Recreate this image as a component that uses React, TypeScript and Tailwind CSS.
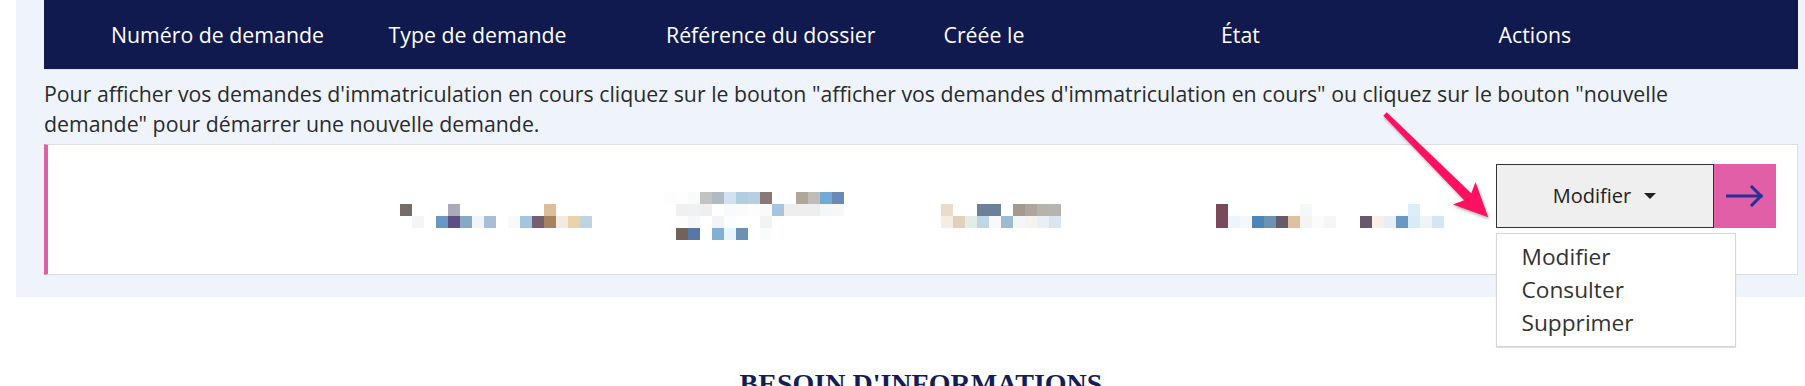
import type { ReactNode } from 'react';

type MosaicRow = string[];

// blurred cell contents, one colour per 12px block ('' = blank)
const typeCells: MosaicRow[] = [
  ['#766c68', '', '', '', '#aaaabb', '', '', '', '', '', '', '', '#dbbf9a', '', '', ''],
  ['', '#f5f5f5', '', '#6699c4', '#5b4f83', '#86a9c4', '#f1f4f8', '#a7bed6', '', '#f9f9f9', '#a3c6e0', '#735f6e', '#a78260', '#f2ebe0', '#ebd2a8', '#bcd4e4'],
];

const refCells: MosaicRow[] = [
  ['#fdfdfc', '#fefefe', '#fafafa', '#c0c3c4', '#b0bac2', '#d3e2f2', '#b2cce0', '#b7cfe0', '#8a7878', '', '', '#b0a69a', '#bebdba', '#74a8d6', '#6a89b7'],
  ['', '#eff0f1', '#eff1f3', '#efefef', '', '#f8fafd', '#f9fbfd', '#fdfdfd', '#fbfaf9', '#a7c4de', '#eeeeee', '#eeeeee', '#eeeeee', '#f3f7fb', '#f5f7fb'],
  ['', '#fdfdfd', '#f6f7f9', '', '#f3f4f7', '#fcfdfe', '', '', '#f3f3f3'],
  ['', '#73625a', '#5878a3', '', '#82b0d4', '#e8f6fb', '#6d91b4', '', '#f9fcfd'],
];

const dateCells: MosaicRow[] = [
  ['#e9dccb', '', '', '#6e8098', '#6a8199', '', '#a59a90', '#afa79e', '#b5b3ae', '#b4b5b1'],
  ['#f5ede3', '#e1d0bb', '#e3ede6', '#bfd6e7', '#f7f9fb', '#9ebbd6', '#f4f7f7', '#f6f3ef', '#e9eff5', '#d8e6ef'],
];

const stateCells: MosaicRow[] = [
  ['#7a4a58', '', '', '', '', '', '', '#f4f8fb', '', '', '', '', '', '', '', '', '#dceef8'],
  ['#7a4a5c', '#eef4fb', '#f4f8fc', '#4b86b8', '#6a93b4', '#675a6a', '#dec29f', '#f4f4f2', '#fbfbfb', '#f4f6f8', '', '', '#67586a', '#f8f0e6', '#e6eef6', '#6898c4', '#d8ecf8', '#f1f4f7', '#d3e6f4'],
];

const columns = ['Numéro de demande', 'Type de demande', 'Référence du dossier', 'Créée le', 'État', 'Actions'];

function Mosaic({ rows, className }: { rows: MosaicRow[]; className?: string }) {
  return (
    <div className={`flex flex-col ${className ?? ''}`}>
      {rows.map((row, i) => (
        <div key={i} className="flex h-[12px]">
          {row.map((c, j) => (
            <div key={j} className="w-[12px] h-[12px] shrink-0" style={{ backgroundColor: c || 'transparent' }} />
          ))}
        </div>
      ))}
    </div>
  );
}

function Cell({ children }: { children?: ReactNode }) {
  return <div className="relative">{children}</div>;
}

function ActionMenu() {
  return (
    <div className="relative ml-[-3px] mt-[19px] flex">
      <button className="flex h-[64px] w-[218px] items-center justify-center gap-[13px] border border-[#333] bg-[#efefef] text-[20px] text-[#222]">
        Modifier
        <span className="mt-[1px] h-0 w-0 border-l-[6px] border-r-[6px] border-t-[6px] border-l-transparent border-r-transparent border-t-[#222]" />
      </button>
      <button className="flex h-[64px] w-[62px] items-center justify-center bg-[#e05fa6]">
        <svg width="38" height="22" viewBox="0 0 38 22" fill="none" stroke="#27309a" strokeWidth="3" strokeLinecap="square">
          <path d="M1.5 11 H35" />
          <path d="M26 2 L35 11 L26 20" strokeLinejoin="miter" />
        </svg>
      </button>

      <ul className="absolute left-0 top-[69px] z-10 w-[240px] border border-[#d6d6d6] bg-white pb-[7px] pt-[6px] text-[22.7px] leading-[33px] text-[#333] shadow-[0_1px_1px_rgba(0,0,0,0.12)]">
        <li className="pl-[25px]">Modifier</li>
        <li className="pl-[25px]">Consulter</li>
        <li className="pl-[25px]">Supprimer</li>
      </ul>
    </div>
  );
}

function PointerArrow() {
  // annotation arrow drawn along its own axis, then turned 45°
  return (
    <svg
      className="pointer-events-none absolute left-[1370px] top-[99px] z-20 drop-shadow-[1px_2px_1.5px_rgba(0,0,0,0.3)]"
      width="140"
      height="140"
      viewBox="0 0 140 140"
    >
      <g transform="translate(15 15) rotate(45)">
        <polygon points="0,-2.4 117,-5 112,-16 146,0 112,16 117,5 0,2.4" fill="#fe1160" />
      </g>
    </svg>
  );
}

export default function App() {
  return (
    <div className="relative h-[386px] w-[1805px] overflow-hidden bg-white font-['Open_Sans',sans-serif]">
      <section className="ml-[16px] w-[1789px] bg-[#eff4fc] pb-[22px] pl-[28px] pr-[7px]">
        <div className="grid h-[70px] grid-cols-[repeat(6,277.5px)] items-center border-b border-[#dfe3ea] bg-[#111a4f] pl-[67px] text-[21.3px] text-white">
          {columns.map((c) => (
            <div key={c}>{c}</div>
          ))}
        </div>

        <p className="w-[1700px] pt-[9px] text-[21.3px] leading-[29.8px] text-[#2b2b2b]">
          Pour afficher vos demandes d'immatriculation en cours cliquez sur le bouton "afficher vos demandes
          d'immatriculation en cours" ou cliquez sur le bouton "nouvelle demande" pour démarrer une nouvelle demande.
        </p>

        <div className="mt-[5px] grid h-[131px] grid-cols-[repeat(6,277.5px)] items-start border border-l-4 border-[#dcdee3] border-l-[#e060a8] bg-white pl-[63px]">
          <Cell />
          <Cell>
            <Mosaic rows={typeCells} className="ml-[11px] mt-[59px]" />
          </Cell>
          <Cell>
            <Mosaic rows={refCells} className="ml-[-2px] mt-[47px]" />
          </Cell>
          <Cell>
            <Mosaic rows={dateCells} className="ml-[-3px] mt-[59px]" />
          </Cell>
          <Cell>
            <Mosaic rows={stateCells} className="ml-[-5px] mt-[59px]" />
          </Cell>
          <Cell>
            <ActionMenu />
          </Cell>
        </div>
      </section>

      <div className="ml-[44px] w-[1754px] pt-[70px] text-center">
        <h2 className="font-['Liberation_Serif',serif] text-[28px] font-bold leading-[33.6px] text-[#151d56]">
          BESOIN D'INFORMATIONS
        </h2>
      </div>

      <PointerArrow />
    </div>
  );
}
